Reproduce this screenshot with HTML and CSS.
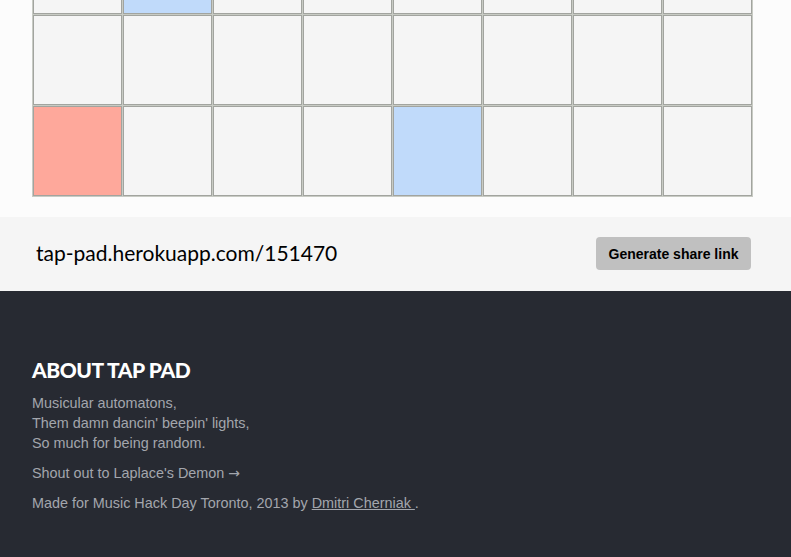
FILE: index.html
```html
<!DOCTYPE html>
<html>
<head>
<meta charset="utf-8">
<link rel="stylesheet" href="styles.css">
</head>
<body>
<section class="pad-area">
  <div class="grid">
    <div class="cell"></div><div class="cell on-blue"></div><div class="cell"></div><div class="cell"></div><div class="cell"></div><div class="cell"></div><div class="cell"></div><div class="cell"></div>
    <div class="cell"></div><div class="cell"></div><div class="cell"></div><div class="cell"></div><div class="cell"></div><div class="cell"></div><div class="cell"></div><div class="cell"></div>
    <div class="cell on-red"></div><div class="cell"></div><div class="cell"></div><div class="cell"></div><div class="cell on-blue"></div><div class="cell"></div><div class="cell"></div><div class="cell"></div>
  </div>
</section>
<section class="share-bar">
  <div class="share-url">tap-pad.herokuapp.com/151470</div>
  <button class="share-btn">Generate share link</button>
</section>
<footer class="about">
  <h2 class="about-title">ABOUT TAP PAD</h2>
  <p>Musicular automatons,<br>Them damn dancin' beepin' lights,<br>So much for being random.</p>
  <p>Shout out to Laplace's Demon <span class="arrow">&rarr;</span></p>
  <p>Made for Music Hack Day Toronto, 2013 by <a href="#">Dmitri Cherniak </a>.</p>
</footer>
</body>
</html>
```
FILE: styles.css
```css
html, body {
  margin: 0;
  padding: 0;
}
body {
  background: #272a32;
  font-family: "Liberation Sans", Arial, sans-serif;
  overflow: hidden;
}
.pad-area {
  background: #fcfcfc;
  padding: 0 0 20px 32px;
  overflow: hidden;
}
.grid {
  margin-top: -77px;
  display: grid;
  grid-template-columns: repeat(8, 89px);
  grid-auto-rows: 90px;
  column-gap: 1px;
  row-gap: 1px;
  padding: 1px;
  width: max-content;
  background: #c8cbc4;
}
.cell {
  box-sizing: border-box;
  border: 1px solid #a2a49f;
  background: #f5f5f5;
}
.cell.on-blue { background: #c0dafa; }
.cell.on-red { background: #fea89b; }

.share-bar {
  height: 74px;
  background: #f5f5f5;
  display: flex;
  align-items: center;
  justify-content: space-between;
  padding: 0 40px 0 36px;
}
.share-url {
  font-family: "Lato", "Open Sans", sans-serif;
  font-size: 21px;
  color: #000;
  margin-top: -4px;
}
.share-btn {
  width: 155px;
  height: 33px;
  padding: 0;
  border: none;
  border-radius: 4px;
  background: #c0c0c0;
  color: #000;
  font-family: "Liberation Sans", Arial, sans-serif;
  font-weight: bold;
  font-size: 14px;
  margin-top: -1px;
}
.about {
  padding: 66px 32px 40px;
  color: #a3a6ad;
  font-size: 14.4px;
  line-height: 20px;
}
.about-title {
  margin: 0 0 10px;
  color: #fff;
  font-family: "Lato", sans-serif;
  font-weight: 900;
  font-size: 21px;
  line-height: 26px;
  letter-spacing: -0.45px;
}
.about p {
  margin: 0 0 10px;
}
.about .arrow {
  font-family: "DejaVu Sans", sans-serif;
  font-size: 14px;
}
.about a {
  color: #a3a6ad;
  text-decoration: underline;
}
```
